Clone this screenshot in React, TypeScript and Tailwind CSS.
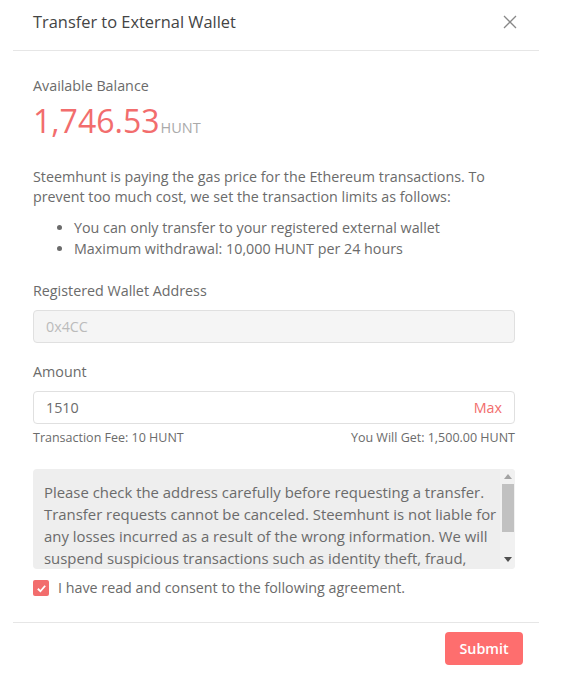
import { useState } from 'react';

const agreement =
  'Please check the address carefully before requesting a transfer. Transfer requests cannot be canceled. Steemhunt is not liable for any losses incurred as a result of the wrong information. We will suspend suspicious transactions such as identity theft, fraud, phone number hijacking, etc., and we are not responsible for the losses.';

export default function App() {
  const [amount, setAmount] = useState('1510');
  const [agreed, setAgreed] = useState(true);

  return (
    <div className="w-full h-[678px] bg-white font-['Open_Sans',sans-serif] text-[#6b6b6b]">
      {/* header */}
      <div className="flex items-start justify-between h-[50px] pt-[11px] pl-[33px] pr-[46px]">
        <h1 className="text-[16.4px] leading-[22px] text-[#444]">Transfer to External Wallet</h1>
        <button className="w-[14px] h-[14px] mt-[4px] text-[#888]">
          <svg viewBox="0 0 14 14" className="w-[14px] h-[14px]" fill="none" stroke="currentColor" strokeWidth="1.3">
            <path d="M1 1 L13 13 M13 1 L1 13" />
          </svg>
        </button>
      </div>
      <div className="mx-[13px] w-[526px] border-t border-[#e6e6e6]" />

      {/* body */}
      <div className="px-[33px] pt-[25px] w-[548px] text-[14.3px]">
        <div className="leading-[20px]">Available Balance</div>
        <div className="flex items-baseline mt-[5px]">
          <span className="text-[32px] leading-[40px] text-[#f26d6d]">1,746.53</span>
          <span className="text-[14.5px] text-[#aaa] ml-[1px]">HUNT</span>
        </div>

        <p className="mt-[26px] leading-[20px]">
          Steemhunt is paying the gas price for the Ethereum transactions. To prevent too much cost, we set the transaction limits as follows:
        </p>
        <ul className="mt-[10px] pl-[41px] list-disc leading-[21px]">
          <li>You can only transfer to your registered external wallet</li>
          <li>Maximum withdrawal: 10,000 HUNT per 24 hours</li>
        </ul>

        <div className="mt-[22px] leading-[20px]">Registered Wallet Address</div>
        <div className="mt-[9px] h-[33px] flex items-center px-[12px] bg-[#f5f5f5] border border-[#e0e0e0] rounded-[4px] text-[#bbb]">
          0x4CC
        </div>

        <div className="mt-[19px] leading-[20px]">Amount</div>
        <div className="mt-[9px] h-[33px] flex items-center px-[12px] bg-white border border-[#e0e0e0] rounded-[4px]">
          <input
            value={amount}
            onChange={(e) => setAmount(e.target.value)}
            className="flex-1 outline-none bg-transparent text-[#6b6b6b]"
          />
          <span className="text-[#f26d6d]">Max</span>
        </div>
        <div className="mt-[6px] flex justify-between text-[12.5px] leading-[16px]">
          <span>Transaction Fee: 10 HUNT</span>
          <span>You Will Get: 1,500.00 HUNT</span>
        </div>

        {/* agreement box */}
        <div className="mt-[23px] h-[100px] flex bg-[#eeeeee] rounded-[4px] overflow-hidden">
          <div className="flex-1 pt-[12px] pl-[11px] pr-[1px] text-[14.9px] leading-[22px] overflow-hidden">
            {agreement}
          </div>
          <div className="w-[15px] flex flex-col items-center bg-[#f1f1f1]">
            <svg viewBox="0 0 8 5" className="w-[8px] h-[5px] mt-[5px]">
              <path d="M0 5 L4 0 L8 5 Z" fill="#a3a3a3" />
            </svg>
            <div className="mt-[5px] w-[12px] h-[48px] bg-[#c1c1c1]" />
            <div className="flex-1" />
            <svg viewBox="0 0 8 5" className="w-[8px] h-[5px] mb-[7px]">
              <path d="M0 0 L8 0 L4 5 Z" fill="#505050" />
            </svg>
          </div>
        </div>

        <label className="mt-[9px] flex items-center gap-[9px] cursor-pointer">
          <span
            onClick={() => setAgreed(!agreed)}
            className={`w-[16px] h-[16px] rounded-[2px] flex items-center justify-center ${agreed ? 'bg-[#f26d6d]' : 'bg-white border border-[#ccc]'}`}
          >
            {agreed && (
              <svg viewBox="0 0 12 12" className="w-[11px] h-[11px]" fill="none" stroke="white" strokeWidth="2">
                <path d="M2 6.3 L4.8 9 L10 3" />
              </svg>
            )}
          </span>
          <span className="leading-[20px]">I have read and consent to the following agreement.</span>
        </label>
      </div>

      <div className="mt-[24px] mx-[13px] w-[526px] border-t border-[#e6e6e6]" />
      <div className="flex justify-end pr-[40px] pt-[9px]">
        <button className="w-[78px] h-[33px] rounded-[4px] bg-[#fe6e6e] text-white text-[14.3px] font-semibold">
          Submit
        </button>
      </div>
    </div>
  );
}
